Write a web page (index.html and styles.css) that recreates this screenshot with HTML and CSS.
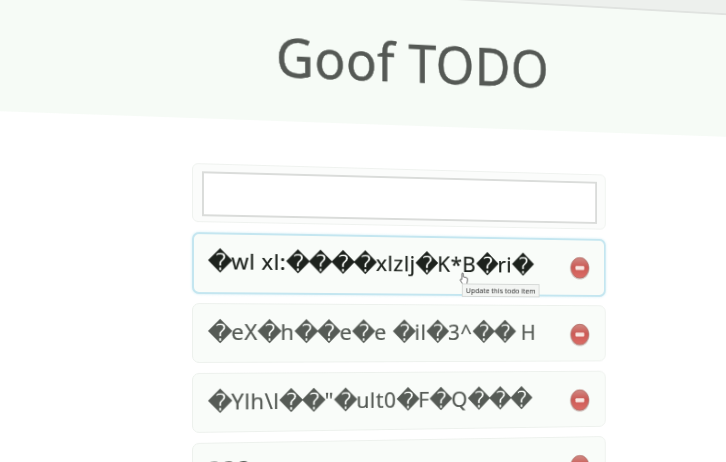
FILE: index.html
```
<!DOCTYPE html>
<html lang="en">
<head>
<meta charset="utf-8">
<title>Goof TODO</title>
<link rel="stylesheet" href="styles.css">
</head>
<body>
<svg class="defs" aria-hidden="true">
  <defs>
    <linearGradient id="ball" x1="0" y1="0" x2="0" y2="1">
      <stop offset="0" stop-color="#d08a84"/>
      <stop offset=".45" stop-color="#cb5a55"/>
      <stop offset="1" stop-color="#dc6c66"/>
    </linearGradient>
    <symbol id="remove" viewBox="0 0 24 26" preserveAspectRatio="none">
      <ellipse cx="12" cy="13.300" rx="11.600" ry="12.300" fill="#a98f8b" opacity=".5"/>
      <ellipse cx="12" cy="12.700" rx="10.500" ry="11.300" fill="url(#ball)" stroke="#b8706a" stroke-width="1"/>
      <rect x="6.800" y="10.600" width="10.400" height="4.400" rx="1" fill="#f8e6e1"/>
    </symbol>
  </defs>
</svg>
<div class="plane">
  <div class="chrome"></div>
  <header class="header"><h1 class="title">Goof TODO</h1></header>
  <main class="list">
    <form class="entry"><input class="field" type="text"></form>
    <div class="item active">
      <span class="text"><i>�</i>wl xl:<i>����</i>xlzlj<i>�</i>K*B<i>�</i>ri<i>�</i></span>
      <svg class="remove"><use href="#remove"/></svg>
      <svg class="cursor" viewBox="0 0 10 14"><path d="M3 7V1.500q1-1 1.600 0V5l4 1q1 .5.6 3l-.8 3.700H4L1 8.500q0-1.500 2-.5z" fill="#fff" stroke="#666" stroke-width="1"/></svg>
      <span class="tooltip">Update this todo item</span>
    </div>
    <div class="item">
      <span class="text"><i>�</i>eX<i>�</i>h<i>��</i>e<i>�</i>e <i>�</i>il<i>�</i>3^<i>��</i> H</span>
      <svg class="remove"><use href="#remove"/></svg>
    </div>
    <div class="item">
      <span class="text"><i>�</i>Ylh\l<i>��</i>"<i>�</i>ult0<i>�</i>F<i>�</i>Q<i>���</i></span>
      <svg class="remove"><use href="#remove"/></svg>
    </div>
    <div class="item">
      <span class="text last">333</span>
      <svg class="remove"><use href="#remove"/></svg>
    </div>
  </main>
</div>
</body>
</html>
```
FILE: styles.css
```
* { box-sizing: border-box; }
html { overflow: hidden; }
body {
  margin: 0;
  height: 462px;
  overflow: hidden;
  background: #fff;
  font-family: "Noto Sans", "DejaVu Sans", sans-serif;
}
.defs { display: block; width: 0; height: 0; }
/* The whole page is a flat sheet seen at an angle. */
.plane {
  width: 1000px;
  margin: -75px 0 0 -100px;
  transform-origin: 292px 413px;
  transform: matrix3d(1,0,0,.00016, 0,1,0,0, 0,0,1,0, 0,0,0,1);
  filter: blur(.7px);
}
.chrome {
  height: 60px;
  background: #edf0ed;
  border-bottom: 2px solid #e0e3e0;
}
.header {
  height: 133px;
  padding: 30px 0 0 377px;
  background: #f6fbf6;
}
.title {
  margin: 0;
  font-size: 54px;
  line-height: 74px;
  font-weight: 400;
  letter-spacing: .4px;
  color: #555955;
  -webkit-text-stroke: .4px #555955;
  white-space: nowrap;
}
.list {
  display: flex;
  flex-direction: column;
  gap: 10px;
  width: 443px;
  margin: 45px 0 0 292px;
}
.entry {
  height: 59px;
  padding: 7px 9px;
  border: 1px solid #eff2ef;
  border-radius: 6px;
  background: #fbfcfb;
}
.field {
  display: block;
  width: 423px;
  height: 45px;
  border: 2px solid #dadcda;
  background: #fff;
}
.item {
  position: relative;
  display: flex;
  justify-content: space-between;
  align-items: flex-start;
  height: 60px;
  padding: 11px 17px 0 15px;
  border: 1px solid #edf1ed;
  border-radius: 7px;
  background: #f9fcf9;
}
.active {
  height: 62px;
  margin-bottom: -1px;
  border: 2px solid #c4e6f0;
  box-shadow: 0 0 3px #d3eef5;
  padding: 10px 16px 0 14px;
}
.text {
  font-size: 22.5px;
  line-height: 34px;
  letter-spacing: .5px;
  color: #565b56;
  -webkit-text-stroke: .2px currentColor;
  white-space: pre;
}
/* Replacement marks are set tighter and larger than the letters. */
.text i {
  font-family: "DejaVu Sans", sans-serif;
  font-style: normal;
  font-size: 24px;
  line-height: 1;
  letter-spacing: -1.150px;
  vertical-align: -1px;
  -webkit-text-stroke: .4px currentColor;
}
.active .text { color: #1d221d; }
.text.last { line-height: 30px; letter-spacing: 2px; }
.remove { width: 23px; height: 25px; margin-top: 7px; }
.cursor {
  position: absolute;
  left: 277px;
  top: 35px;
  width: 10px;
  height: 14px;
}
.tooltip {
  position: absolute;
  left: 280px;
  top: 47px;
  width: 86px;
  height: 14px;
  border: 1px solid #d5d8d6;
  background: #f3f5f3;
  color: #333;
  font-size: 7.500px;
  line-height: 12px;
  text-align: center;
  white-space: nowrap;
}
```
